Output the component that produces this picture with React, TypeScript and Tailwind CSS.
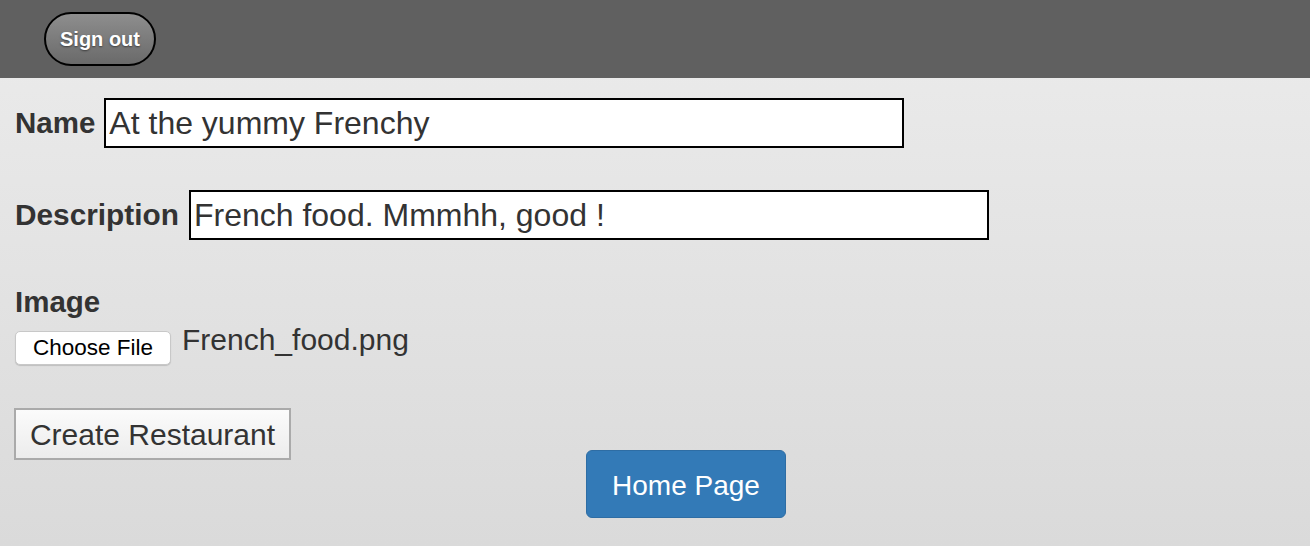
export default function App() {
  return (
    <div
      className="min-h-[546px] bg-gradient-to-b from-[#ececec] to-[#dadada] text-[#333]"
      style={{ fontFamily: '"Liberation Sans", Arial, sans-serif' }}
    >
      {/* Top bar */}
      <div className="h-[78px] bg-[#606060] flex items-center pl-[44px]">
        <button className="h-[54px] w-[112px] rounded-full border-2 border-black bg-gradient-to-b from-[#8e8e8e] to-[#6a6a6a] text-white font-bold text-[20px] [text-shadow:0_1px_2px_rgba(0,0,0,0.5)]">
          Sign out
        </button>
      </div>

      {/* Form */}
      <div className="pl-[15px] pt-[20px]">
        <div className="flex items-center h-[50px]">
          <span className="font-bold text-[29.5px] mr-[9px]">Name</span>
          <div className="w-[800px] h-[50px] border-2 border-black bg-white flex items-center pl-[3px] text-[32px]">
            At the yummy Frenchy
          </div>
        </div>

        <div className="flex items-center h-[50px] mt-[42px]">
          <span className="font-bold text-[29.8px] mr-[10px]">Description</span>
          <div className="w-[800px] h-[50px] border-2 border-black bg-white flex items-center pl-[3px] text-[32px]">
            French food. Mmmhh, good !
          </div>
        </div>

        <div className="mt-[46px] font-bold text-[29.5px] leading-[32px]">Image</div>
        <div className="flex items-start mt-[10px]">
          <button className="mt-[3px] h-[34px] w-[156px] rounded-[5px] bg-white border border-[#c8c8c8] shadow-[0_1px_1px_rgba(0,0,0,0.15)] text-black text-[22.5px] leading-none">
            Choose File
          </button>
          <span className="ml-[11px] -mt-[4px] text-[30px] leading-[32px]">French_food.png</span>
        </div>

        <button className="mt-[43px] -ml-px h-[52px] w-[277px] border-2 border-[#aaa] bg-gradient-to-b from-[#fbfbfb] to-[#ececec] text-[30px] text-[#333]">
          Create Restaurant
        </button>
      </div>

      <div className="pl-[586px] -mt-[10px]">
        <button className="h-[68px] w-[200px] rounded-[6px] bg-[#337ab7] border border-[#2e6da4] text-white text-[28px] pt-[3px]">
          Home Page
        </button>
      </div>
    </div>
  );
}
